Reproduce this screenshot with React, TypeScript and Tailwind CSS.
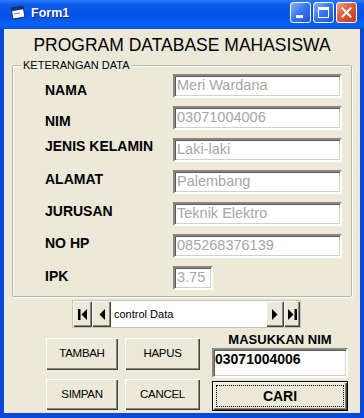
import React from "react";

const fields = [
  { label: "NAMA", value: "Meri Wardana", pad: "pt-[8px]", box: "w-[169px]" },
  { label: "NIM", value: "03071004006", pad: "pt-[7px]", box: "w-[169px]" },
  { label: "JENIS KELAMIN", value: "Laki-laki", pad: "pt-0", box: "w-[169px]" },
  { label: "ALAMAT", value: "Palembang", pad: "pt-[1px]", box: "w-[169px]" },
  { label: "JURUSAN", value: "Teknik Elektro", pad: "pt-[1px]", box: "w-[169px]" },
  { label: "NO HP", value: "085268376139", pad: "pt-[1px]", box: "w-[169px]" },
  { label: "IPK", value: "3.75", pad: "pt-[2px]", box: "w-[40px]" },
];

// classic sunken / raised 3D edges
const sunken =
  "border-2 border-t-[#8a8880] border-l-[#8a8880] border-b-white border-r-white shadow-[inset_1px_1px_0_#5a5a5a,inset_-1px_-1px_0_#d4d0c8]";
const raised =
  "shadow-[inset_1px_1px_0_#ffffff,inset_-1px_-1px_0_#404040,inset_-2px_-2px_0_#8a8880]";

function TitleButton({ kind }: { kind: "min" | "max" | "close" }) {
  const bg =
    kind === "close"
      ? "bg-[linear-gradient(135deg,#f0a28c,#dd5a3c_45%,#c33a20)]"
      : "bg-[linear-gradient(135deg,#8cb4fc,#3a78f4_45%,#1d51dc)]";
  return (
    <div className={`flex h-[21px] w-[21px] items-center justify-center rounded-[3px] border border-white ${bg}`}>
      {kind === "min" && (
        <svg width="13" height="13" viewBox="0 0 13 13">
          <rect x="2" y="9" width="7" height="3" fill="white" />
        </svg>
      )}
      {kind === "max" && (
        <svg width="13" height="13" viewBox="0 0 13 13">
          <rect x="1.5" y="1.5" width="10" height="10" fill="none" stroke="white" strokeWidth="1" />
          <rect x="1" y="1" width="11" height="3" fill="white" />
        </svg>
      )}
      {kind === "close" && (
        <svg width="13" height="13" viewBox="0 0 13 13">
          <path d="M2.5 2.5 L10.5 10.5 M10.5 2.5 L2.5 10.5" stroke="white" strokeWidth="2" strokeLinecap="square" />
        </svg>
      )}
    </div>
  );
}

function FormIcon() {
  return (
    <svg width="16" height="16" viewBox="0 0 16 16">
      <path d="M1 3 L13 1 L15 12 L3 14 Z" fill="#ffffff" stroke="#1a2a5a" strokeWidth="1" />
      <path d="M1 3 L13 1 L13.6 4.2 L1.6 6.2 Z" fill="#1b2f7a" />
      <rect x="4" y="8" width="6" height="1" fill="#8a8a8a" transform="rotate(-9 7 8)" />
    </svg>
  );
}

function NavButton({ glyph, w }: { glyph: "first" | "prev" | "next" | "last"; w: string }) {
  return (
    <div className={`flex h-full ${w} items-center justify-center bg-[#ece9d8] ${raised}`}>
      {glyph === "first" && (
        <svg width="9" height="11" viewBox="0 0 9 11">
          <rect x="0" y="0" width="2.5" height="11" fill="black" />
          <polygon points="9,0 3.5,5.5 9,11" fill="black" />
        </svg>
      )}
      {glyph === "prev" && (
        <svg width="6" height="11" viewBox="0 0 6 11">
          <polygon points="6,0 0.5,5.5 6,11" fill="black" />
        </svg>
      )}
      {glyph === "next" && (
        <svg width="6" height="11" viewBox="0 0 6 11">
          <polygon points="0,0 5.5,5.5 0,11" fill="black" />
        </svg>
      )}
      {glyph === "last" && (
        <svg width="9" height="11" viewBox="0 0 9 11">
          <polygon points="0,0 5.5,5.5 0,11" fill="black" />
          <rect x="6.5" y="0" width="2.5" height="11" fill="black" />
        </svg>
      )}
    </div>
  );
}

function Btn({ label, w, h }: { label: string; w: string; h: string }) {
  return (
    <div className={`flex ${w} ${h} items-center justify-center bg-[#ece9d8] text-[11.5px] tracking-[-0.3px] text-black ${raised}`}>
      {label}
    </div>
  );
}

export default function App() {
  return (
    <div className="flex h-[418px] w-[364px] flex-col overflow-hidden bg-[#0a47db] font-['Liberation_Sans',Arial,sans-serif]">
      {/* title bar */}
      <div className="flex h-[29px] shrink-0 items-start bg-[linear-gradient(to_bottom,#2a7cf8,#0a5ae8_18%,#0553e6_50%,#0863f5_88%,#0a4ed8)] pl-[10px] pr-[7px]">
        <div className="mt-[5px] flex items-center gap-[5px]">
          <FormIcon />
          <span className="text-[12.5px] font-bold leading-[16px] text-white [text-shadow:1px_1px_0_#0a2a80]">Form1</span>
        </div>
        <div className="ml-auto mt-[2px] flex gap-[2px]">
          <TitleButton kind="min" />
          <TitleButton kind="max" />
          <TitleButton kind="close" />
        </div>
      </div>

      {/* window body */}
      <div className="mx-[4px] mb-[5px] flex flex-1 flex-col bg-[#ece9d8]">
        <div className="pt-[6px] text-center text-[17.5px] leading-[20px] text-black">PROGRAM DATABASE MAHASISWA</div>

        <fieldset className="ml-[8px] mt-[4px] w-[340px] rounded-[2px] border border-[#b8b5a6] pb-[6px] shadow-[inset_1px_1px_0_#ffffff,1px_1px_0_#ffffff]">
          <legend className="ml-[9px] px-[1px] text-[11px] leading-[12px] text-black">KETERANGAN DATA</legend>
          <div className="flex flex-col gap-[8px] pt-[3px]">
            {fields.map((f) => (
              <div key={f.label} className="flex h-[24px] items-start">
                <div className={`w-[160px] pl-[32px] text-[14px] font-bold leading-[16px] text-black ${f.pad}`}>{f.label}</div>
                <div className={`flex h-[24px] items-center bg-white pl-[2px] text-[14.5px] text-[#a6a6a6] ${f.box} ${sunken}`}>
                  {f.value}
                </div>
              </div>
            ))}
          </div>
        </fieldset>

        {/* data control */}
        <div className="ml-[68px] mt-[3px] flex h-[28px] w-[229px] border border-[#c7c4b4] bg-white">
          <NavButton glyph="first" w="w-[19px]" />
          <NavButton glyph="prev" w="w-[19px]" />
          <div className="flex flex-1 items-center pl-[3px] text-[11px] text-black">control Data</div>
          <NavButton glyph="next" w="w-[18px]" />
          <NavButton glyph="last" w="w-[16px]" />
        </div>

        <div className="mt-[10px] flex">
          <div className="ml-[42px] grid grid-cols-[72px_75px] gap-x-[7px] gap-y-[8px]">
            <Btn label="TAMBAH" w="w-[72px]" h="h-[32px]" />
            <Btn label="HAPUS" w="w-[75px]" h="h-[32px]" />
            <Btn label="SIMPAN" w="w-[72px]" h="h-[31px]" />
            <Btn label="CANCEL" w="w-[75px]" h="h-[31px]" />
          </div>
          <div className="ml-[12px] mt-[-6px] flex w-[136px] flex-col">
            <div className="text-center text-[13px] font-bold leading-[16px] text-black">MASUKKAN NIM</div>
            <div className={`h-[30px] bg-white pl-[1px] text-[14px] font-bold leading-[18px] text-black ${sunken}`}>03071004006</div>
            <div className="mt-[3px] h-[30px] border border-black">
              <div className={`flex h-full items-center justify-center bg-[#ece9d8] p-[3px] ${raised}`}>
                <div className="flex h-full w-full items-center justify-center border border-dotted border-black text-[14px] font-bold text-black">
                  CARI
                </div>
              </div>
            </div>
          </div>
        </div>
      </div>
    </div>
  );
}
